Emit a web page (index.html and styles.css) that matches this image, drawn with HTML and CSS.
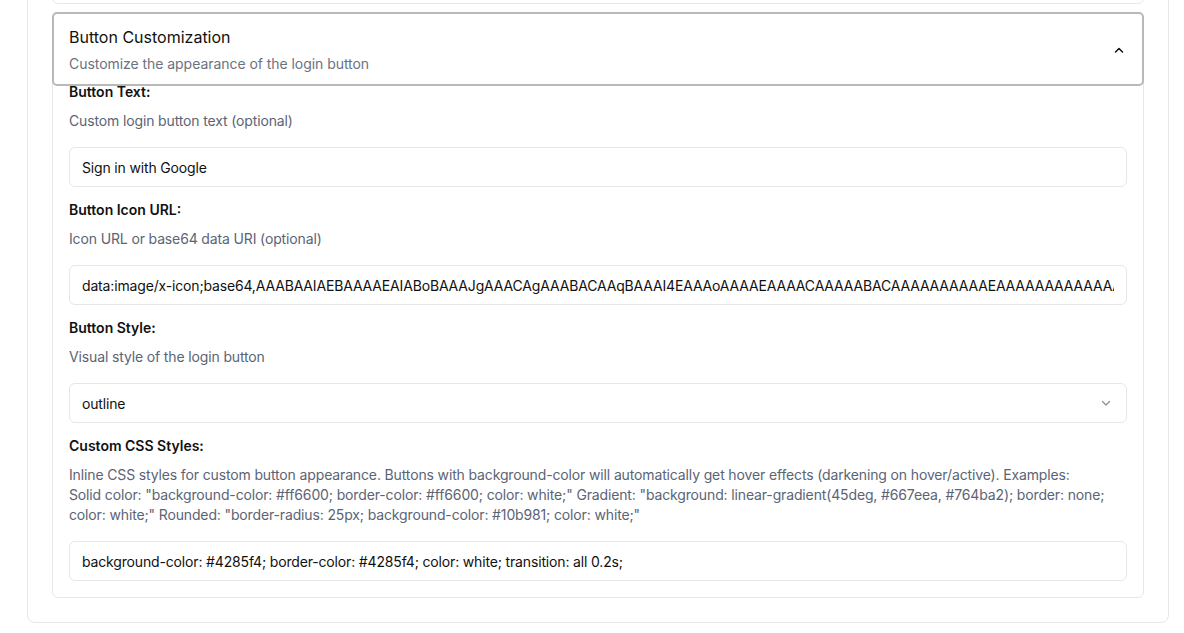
FILE: index.html
```html
<!DOCTYPE html>
<html>
<head>
<meta charset="utf-8">
<link rel="stylesheet" href="styles.css">
</head>
<body>
<div class="page">
  <div class="card">
    <div class="item item-prev"></div>
    <div class="item">
      <div class="item-header">
        <div class="head-text">
          <div class="title">Button Customization</div>
          <div class="subtitle">Customize the appearance of the login button</div>
        </div>
        <svg class="chev-up" width="16" height="16" viewBox="0 0 16 16" fill="none" stroke="#111" stroke-width="1.5" stroke-linecap="round" stroke-linejoin="round"><path d="M4.5 10 L8 6.5 L11.5 10"/></svg>
      </div>
      <div class="item-body">
        <div class="field">
          <div class="label">Button Text:</div>
          <div class="desc">Custom login button text (optional)</div>
          <input class="input" type="text" value="Sign in with Google">
        </div>
        <div class="field">
          <div class="label">Button Icon URL:</div>
          <div class="desc">Icon URL or base64 data URI (optional)</div>
          <input class="input" type="text" value="data:image/x-icon;base64,AAABAAIAEBAAAAEAIABoBAAAJgAAACAgAAABACAAqBAAAI4EAAAoAAAAEAAAACAAAAABACAAAAAAAAAAEAAAAAAAAAAAAAAAAAAAAAAAAAAAAAAAAAAAAAAAAAAAAA">
        </div>
        <div class="field">
          <div class="label">Button Style:</div>
          <div class="desc">Visual style of the login button</div>
          <div class="select">
            <span>outline</span>
            <svg width="16" height="16" viewBox="0 0 16 16" fill="none" stroke="#8a8f98" stroke-width="1.3" stroke-linecap="round" stroke-linejoin="round"><path d="M4.5 6.5 L8 10 L11.5 6.5"/></svg>
          </div>
        </div>
        <div class="field">
          <div class="label">Custom CSS Styles:</div>
          <div class="desc">Inline CSS styles for custom button appearance. Buttons with background-color will automatically get hover effects (darkening on hover/active). Examples:<br>Solid color: "background-color: #ff6600; border-color: #ff6600; color: white;" Gradient: "background: linear-gradient(45deg, #667eea, #764ba2); border: none; color: white;" Rounded: "border-radius: 25px; background-color: #10b981; color: white;"</div>
          <input class="input" type="text" value="background-color: #4285f4; border-color: #4285f4; color: white; transition: all 0.2s;">
        </div>
      </div>
    </div>
  </div>
</div>
</body>
</html>
```

FILE: styles.css
```css
html, body {
  margin: 0;
  padding: 0;
  background: #ffffff;
  overflow: hidden;
}
body {
  font-family: Inter, "Liberation Sans", sans-serif;
  color: #111827;
  font-size: 14px;
}
.page {
  padding-left: 27px;
  width: 1142px;
}
.card {
  margin-top: -40px;
  border: 1px solid #e5e7eb;
  border-radius: 8px;
  padding: 24px;
  display: flex;
  flex-direction: column;
  gap: 8px;
}
.item {
  border: 1px solid #e5e7eb;
  border-radius: 6px;
  box-sizing: border-box;
}
.item-prev {
  height: 19px;
}
.item-header {
  display: flex;
  align-items: center;
  justify-content: space-between;
  padding: 12px 16px 11px 16px;
  outline: 2px solid #b9b9b9;
  outline-offset: -1px;
  border-radius: 4px;
}
.head-text {
  display: flex;
  flex-direction: column;
  gap: 5px;
}
.title {
  font-size: 16px;
  line-height: 24px;
  font-weight: 400;
  color: #111111;
}
.subtitle {
  font-size: 14px;
  line-height: 20px;
  color: #6b7280;
  letter-spacing: -0.05px;
}
.chev-up {
  display: block;
}
.item-body {
  padding: 0 16px 16px 16px;
  display: flex;
  flex-direction: column;
  gap: 16px;
}
.field {
  display: flex;
  flex-direction: column;
}
.label {
  font-size: 14px;
  line-height: 14px;
  font-weight: 600;
  color: #111111;
}
.desc {
  margin-top: 12px;
  font-size: 14px;
  line-height: 20px;
  color: #5b6475;
  letter-spacing: -0.14px;
}
.input, .select {
  margin-top: 16px;
  box-sizing: border-box;
  height: 40px;
  width: 100%;
  border: 1px solid #e5e7eb;
  border-radius: 6px;
  padding: 0 12px;
  font-family: Inter, "Liberation Sans", sans-serif;
  font-size: 14px;
  letter-spacing: -0.16px;
  color: #111111;
  background: #ffffff;
  outline: none;
}
.select {
  display: flex;
  align-items: center;
  justify-content: space-between;
  padding-right: 12px;
}
.select svg {
  display: block;
}
```
